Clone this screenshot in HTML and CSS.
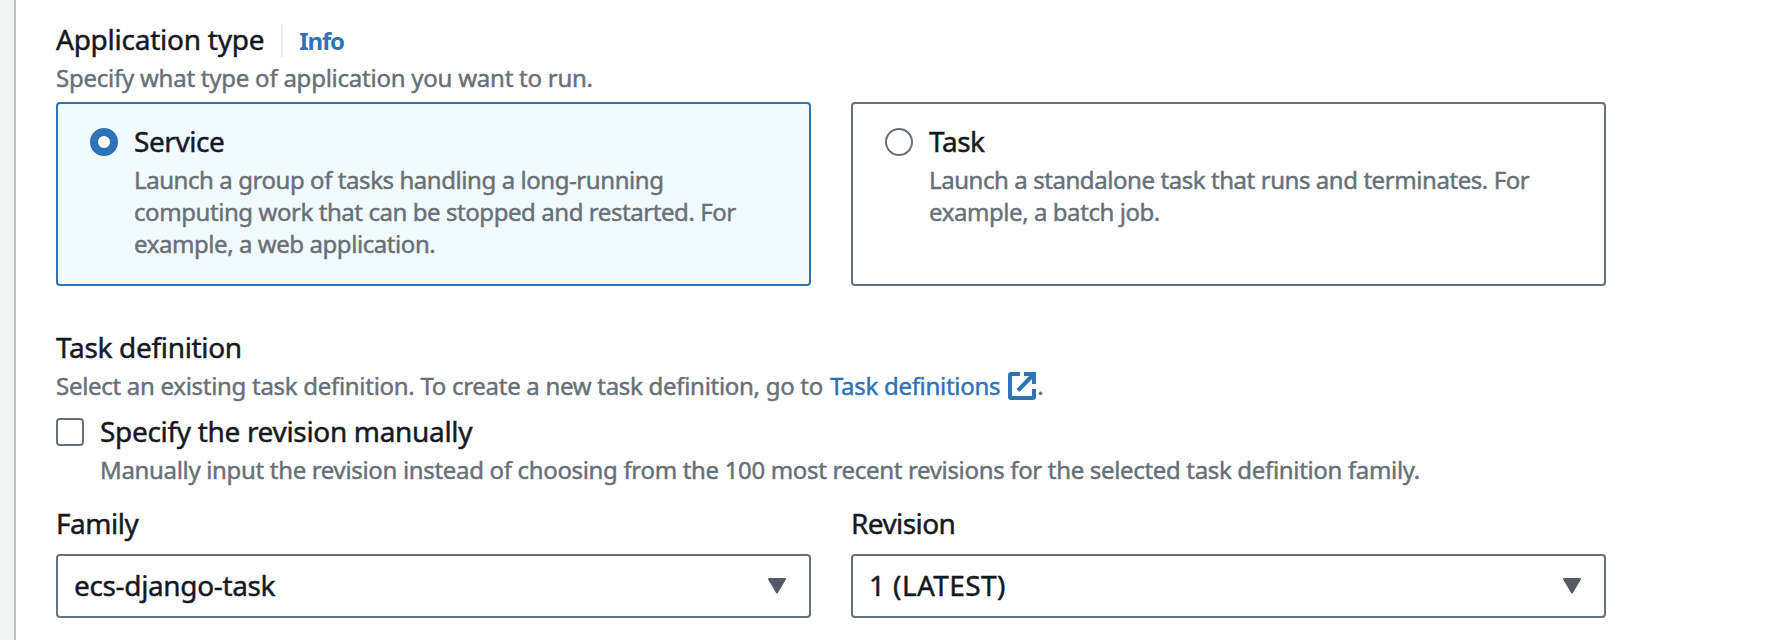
FILE: index.html
```html
<!DOCTYPE html>
<html lang="en">
<head>
<meta charset="utf-8">
<title>Deployment configuration</title>
<link rel="stylesheet" href="styles.css">
</head>
<body>
<main class="panel">
  <section class="field">
    <div class="heading-row">
      <h2 class="label label-type">Application type</h2>
      <a class="info">Info</a>
    </div>
    <p class="hint hint-type">Specify what type of application you want to run.</p>
    <div class="columns tiles">
      <div class="tile tile-selected">
        <span class="radio radio-checked"></span>
        <div class="tile-body">
          <div class="label">Service</div>
          <p class="hint">Launch a group of tasks handling a long-running<br>computing work that can be stopped and restarted. For<br>example, a web application.</p>
        </div>
      </div>
      <div class="tile">
        <span class="radio"></span>
        <div class="tile-body">
          <div class="label">Task</div>
          <p class="hint">Launch a standalone task that runs and terminates. For<br>example, a batch job.</p>
        </div>
      </div>
    </div>
  </section>

  <section class="field definition">
    <h2 class="label label-definition">Task definition</h2>
    <p class="hint hint-definition"><span>Select an existing task definition. To create a new task definition, go to</span><a class="link">Task definitions</a><svg class="external" viewBox="0 0 28 28" fill="none" stroke="currentColor" stroke-width="4"><path d="M12 2H3Q2 2 2 3V25Q2 26 3 26H25Q26 26 26 25V17"/><path d="M16 2H26V12M25 3L10 18.5"/></svg><span>.</span></p>
    <div class="check-row">
      <span class="checkbox"></span>
      <div>
        <div class="label label-check">Specify the revision manually</div>
        <p class="hint hint-check">Manually input the revision instead of choosing from the 100 most recent revisions for the selected task definition family.</p>
      </div>
    </div>
    <div class="columns selects">
      <div>
        <div class="label label-select">Family</div>
        <div class="select"><span class="value">ecs-django-task</span><svg class="caret" viewBox="0 0 20 16"><path d="M2 1H18L10 14.5Z"/></svg></div>
      </div>
      <div>
        <div class="label label-select label-revision">Revision</div>
        <div class="select"><span class="value value-revision">1 (LATEST)</span><svg class="caret" viewBox="0 0 20 16"><path d="M2 1H18L10 14.5Z"/></svg></div>
      </div>
    </div>
  </section>
</main>
</body>
</html>
```

FILE: styles.css
```css
* { box-sizing: border-box; }

body {
  margin: 0;
  height: 640px;
  padding-left: 14px;
  overflow: hidden;
  background: #f2f3f3;
  color: #16191f;
  font-family: "Noto Sans", "Open Sans", sans-serif;
}

.panel {
  height: 640px;
  padding: 19px 172px 0 40px;
  border-left: 2px solid #bec3c4;
  background: #fff;
}

.label {
  margin: 0;
  font-size: 28px;
  font-weight: 400;
  line-height: 40px;
  letter-spacing: -0.45px;
  white-space: nowrap;
  -webkit-text-stroke: 0.45px currentColor;
}
.label-type { letter-spacing: -0.25px; }
.label-definition { letter-spacing: -0.32px; }
.label-check { letter-spacing: -0.32px; }
.label-revision { letter-spacing: -0.6px; }

.hint {
  margin: 0;
  color: #687078;
  font-size: 24px;
  line-height: 32px;
  letter-spacing: -0.43px;
  white-space: nowrap;
  -webkit-text-stroke: 0.45px currentColor;
}
.hint-type { margin-top: 3px; letter-spacing: -0.24px; }

.heading-row {
  display: flex;
  align-items: center;
}
.info {
  margin: 4px 0 0 17px;
  padding-left: 16px;
  border-left: 2px solid #eaeded;
  color: #2e73b8;
  font-size: 24px;
  font-weight: 700;
  line-height: 32px;
  letter-spacing: -1.1px;
}

.columns {
  display: grid;
  grid-template-columns: 755px 755px;
  column-gap: 40px;
}

.tiles { margin-top: 8px; }
.tile {
  display: flex;
  height: 184px;
  padding: 17px 32px 0;
  border: 2px solid #687078;
  border-radius: 4px;
}
.tile-selected {
  border-color: #2e73b8;
  background: #f1fafd;
}
.tile-body .hint { margin-top: 3px; }

.radio {
  flex: none;
  width: 28px;
  height: 28px;
  margin: 7px 16px 0 0;
  border: 2px solid #687078;
  border-radius: 50%;
  background: #fff;
}
.radio-checked { border: 8px solid #2e73b8; }

.definition { margin-top: 41px; }
.hint-definition {
  display: flex;
  margin-top: 3px;
  letter-spacing: -0.29px;
}
.link { margin-left: 7px; color: #2e73b8; }
.external {
  width: 28px;
  height: 28px;
  margin: 2px 1px 0 8px;
  color: #2e73b8;
}

.check-row {
  display: flex;
  margin-top: 9px;
}
.checkbox {
  flex: none;
  width: 28px;
  height: 28px;
  margin: 7px 16px 0 0;
  border: 2px solid #687078;
  border-radius: 4px;
}
.hint-check { margin-top: 3px; letter-spacing: -0.33px; }

.selects { margin-top: 17px; }
.select {
  display: flex;
  align-items: center;
  justify-content: space-between;
  height: 64px;
  margin-top: 11px;
  padding: 0 22px 0 16px;
  border: 2px solid #687078;
  border-radius: 4px;
}
.value {
  margin-top: -2px;
  font-size: 28px;
  line-height: 40px;
  letter-spacing: -0.35px;
  -webkit-text-stroke: 0.45px currentColor;
}
.value-revision { letter-spacing: 0.4px; }
.caret {
  width: 20px;
  height: 16px;
  fill: #545b64;
  stroke: #545b64;
  stroke-width: 2;
  stroke-linejoin: round;
}
```
